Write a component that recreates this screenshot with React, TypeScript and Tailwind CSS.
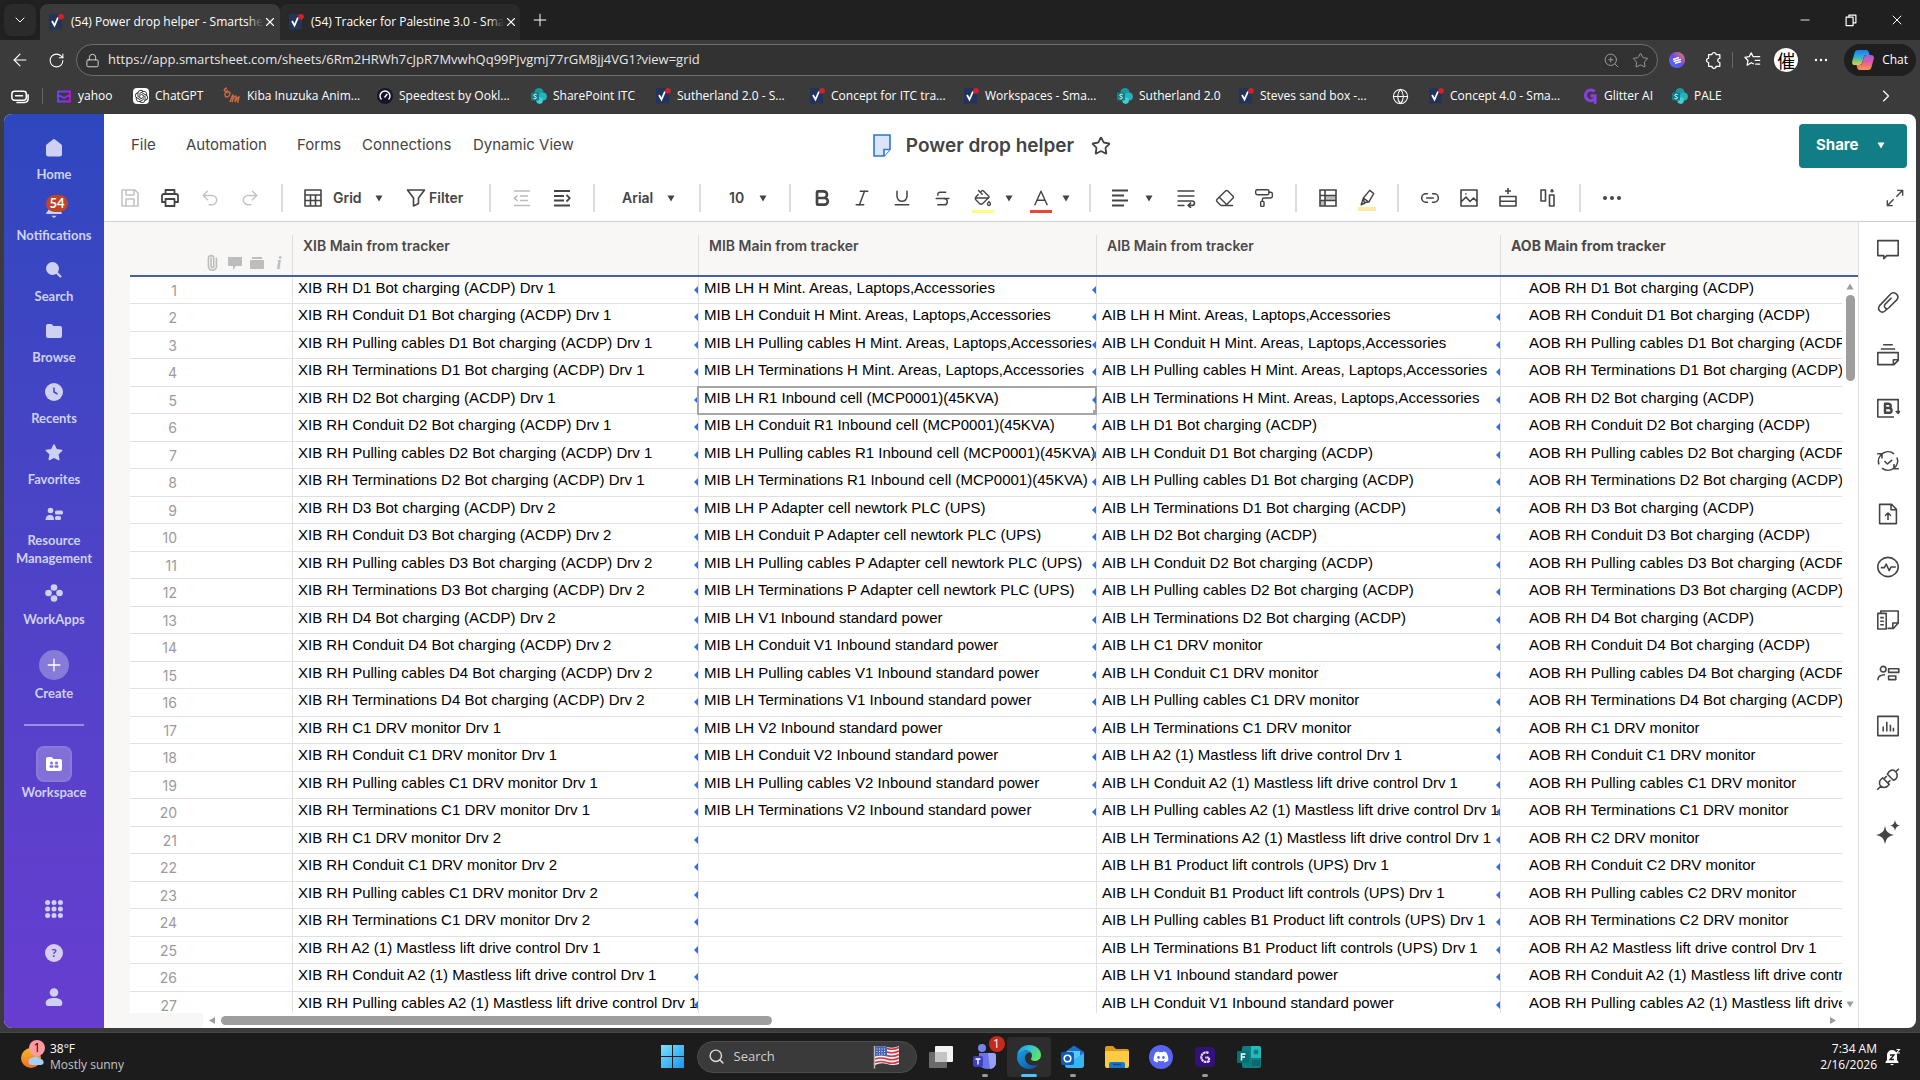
import React from "react";
import {
  ArrowLeft,
  Bold,
  ChevronDown,
  ChevronRight,
  Eraser,
  Globe,
  Italic,
  Link2,
  Lock,
  Minus,
  PaintBucket,
  PaintRoller,
  Paperclip,
  Plus,
  Redo2,
  RotateCw,
  Search,
  Star,
  Strikethrough,
  Underline,
  Undo2,
  X,
  ZoomIn,
} from "lucide-react";
import { FaDiscord } from "react-icons/fa";
import { SiOpenai } from "react-icons/si";

/* ---------- data ---------- */

const STEPS = ["", "Conduit ", "Pulling cables ", "Terminations "];

const expand = (prefix: string, items: string[]) =>
  items.flatMap((item) => STEPS.map((step) => `${prefix} ${step}${item}`));

const XIB = expand("XIB RH", [
  "D1 Bot charging (ACDP) Drv 1",
  "D2 Bot charging (ACDP) Drv 1",
  "D3 Bot charging (ACDP) Drv 2",
  "D4 Bot charging (ACDP) Drv 2",
  "C1 DRV monitor Drv 1",
  "C1 DRV monitor Drv 2",
  "A2 (1) Mastless lift drive control Drv 1",
]);

const MIB = expand("MIB LH", [
  "H Mint. Areas, Laptops,Accessories",
  "R1 Inbound cell (MCP0001)(45KVA)",
  "P Adapter cell newtork PLC (UPS)",
  "V1 Inbound standard power",
  "V2 Inbound standard power",
]);

const AIB = [
  "",
  ...expand("AIB LH", [
    "H Mint. Areas, Laptops,Accessories",
    "D1 Bot charging (ACDP)",
    "D2 Bot charging (ACDP)",
    "C1 DRV monitor",
    "A2 (1) Mastless lift drive control Drv 1",
    "B1 Product lift controls (UPS) Drv 1",
    "V1 Inbound standard power",
  ]),
];

const AOB = expand("AOB RH", [
  "D1 Bot charging (ACDP)",
  "D2 Bot charging (ACDP)",
  "D3 Bot charging (ACDP)",
  "D4 Bot charging (ACDP)",
  "C1 DRV monitor",
  "C2 DRV monitor",
  "A2 (1) Mastless lift drive control Drv 1",
]);
AOB[24] = "AOB RH A2 Mastless lift drive control Drv 1";

const ROWS = Array.from({ length: 27 }, (_, i) => i);

/* ---------- small pieces ---------- */

const Ico: React.FC<{
  d: string;
  size?: number;
  className?: string;
  width?: number;
}> = ({ d, size = 20, className = "", width = 1.6 }) => (
  <svg
    width={size}
    height={size}
    viewBox="0 0 20 20"
    fill="none"
    stroke="currentColor"
    strokeWidth={width}
    strokeLinejoin="round"
    className={`shrink-0 ${className}`}
  >
    <path d={d} />
  </svg>
);

const Caret: React.FC<{ className?: string }> = ({ className = "" }) => (
  <svg
    width="8"
    height="7"
    viewBox="0 0 8 7"
    className={`shrink-0 pointer-events-none ${className}`}
  >
    <path d="M0.5 0.5h7L4 6.5z" fill="currentColor" />
  </svg>
);

const SmartsheetIcon = () => (
  <svg width="16" height="16" viewBox="0 0 16 16" className="shrink-0">
    <path d="M1 0h13v16l-3-1-10 1z" fill="#22345a" />
    <path
      d="M4 7l2.5 4.5L10 3.5"
      fill="none"
      stroke="#fff"
      strokeWidth="1.8"
    />
    <circle cx="13" cy="2.8" r="2.8" fill="#d8202c" />
  </svg>
);

const SharePointIcon = () => (
  <svg width="16" height="16" viewBox="0 0 16 16" className="shrink-0">
    <circle cx="8" cy="4.5" r="4.5" fill="#1a98a1" />
    <circle cx="11.8" cy="8.5" r="4.1" fill="#27b3bc" />
    <circle cx="8.6" cy="12.6" r="3.3" fill="#45cdd4" />
    <rect x="0" y="4.5" width="8" height="8" rx="1" fill="#0f7f88" />
    <path
      d="M5.6 6.6C4.6 6 2.8 6.2 2.8 7.4c0 1.3 2.6.9 2.6 2.3 0 1.2-1.9 1.4-2.9.7"
      fill="none"
      stroke="#fff"
      strokeWidth="1"
    />
  </svg>
);

const YahooIcon = () => (
  <svg width="16" height="16" viewBox="0 0 16 16" className="shrink-0">
    <defs>
      <linearGradient id="yh">
        <stop offset="0" stopColor="#5b4bff" />
        <stop offset="1" stopColor="#b516e8" />
      </linearGradient>
    </defs>
    <path
      d="M2 3.5h12v10H2z M2 6.5l6 3.5 6-3.5"
      fill="none"
      stroke="url(#yh)"
      strokeWidth="1.8"
    />
  </svg>
);

const KibaIcon = () => (
  <svg
    width="18"
    height="18"
    viewBox="0 0 18 18"
    className="shrink-0"
    fill="none"
    stroke="#d0683f"
    strokeWidth="1.5"
  >
    <path d="M4 1C0 2 1 5 4 4M5 3C0 7 2 12 6 9c2-2 1-6-2-3M7 15c1-3 2-6 3-7 1 1 0 4-1 7 1-3 3-6 4-6 1 1-1 4-1 6 1-2 3-5 4-5 0 2-2 4-1 6" />
  </svg>
);

const SpeedtestIcon = () => (
  <svg width="16" height="16" viewBox="0 0 16 16" className="shrink-0">
    <circle cx="8" cy="8" r="8" fill="#15162b" />
    <path
      d="M4.5 11.5a5 5 0 1 1 7 0M7.5 9.5l2.8-3.5"
      fill="none"
      stroke="#fff"
      strokeWidth="1.4"
    />
  </svg>
);

const GlitterIcon = () => (
  <svg
    width="16"
    height="16"
    viewBox="0 0 16 16"
    className="shrink-0"
    fill="none"
    stroke="#8a3fe0"
    strokeWidth="3.2"
  >
    <path d="M12.5 3.5A5.3 5.3 0 1 0 12 11.5M8.5 7.800h4.5v6q0 1 1.500 1" />
  </svg>
);

/* ---------- browser ---------- */

const Tab: React.FC<{ title: string; active?: boolean }> = ({
  title,
  active,
}) => (
  <div
    className={`flex items-center w-60 h-9 px-2 rounded-t-lg ${
      active ? "bg-[#3b3b3b]" : "bg-[#292929]"
    }`}
  >
    <SmartsheetIcon />
    <span className="relative flex-1 ml-[7px] whitespace-nowrap">
      {title}
      <span
        className={`absolute right-0 inset-y-0 w-4 bg-linear-to-r from-transparent ${
          active ? "to-[#3b3b3b]" : "to-[#292929]"
        }`}
      />
    </span>
    <button aria-label="Close tab" className="relative">
      <X size={14} strokeWidth={2} />
    </button>
  </div>
);

const BOOKMARKS: { label: string; icon: React.ReactNode; w: string }[] = [
  { label: "yahoo", icon: <YahooIcon />, w: "w-[77px]" },
  {
    label: "ChatGPT",
    icon: (
      <span className="grid place-items-center size-4 rounded-sm bg-white text-[#222] shrink-0">
        <SiOpenai size={13} />
      </span>
    ),
    w: "w-[90px]",
  },
  { label: "Kiba Inuzuka Anim...", icon: <KibaIcon />, w: "w-[154px]" },
  { label: "Speedtest by Ookl...", icon: <SpeedtestIcon />, w: "w-[154px]" },
  { label: "SharePoint ITC", icon: <SharePointIcon />, w: "w-[124px]" },
  { label: "Sutherland 2.0 - S...", icon: <SmartsheetIcon />, w: "w-[154px]" },
  { label: "Concept for ITC tra...", icon: <SmartsheetIcon />, w: "w-[154px]" },
  { label: "Workspaces - Sma...", icon: <SmartsheetIcon />, w: "w-[154px]" },
  { label: "Sutherland 2.0", icon: <SharePointIcon />, w: "w-[121px]" },
  { label: "Steves sand box -...", icon: <SmartsheetIcon />, w: "w-[154px]" },
  { label: "", icon: <Globe size={17} strokeWidth={1.5} />, w: "w-9" },
  { label: "Concept 4.0 - Sma...", icon: <SmartsheetIcon />, w: "w-[154px]" },
  { label: "Glitter AI", icon: <GlitterIcon />, w: "w-[90px]" },
  { label: "PALE", icon: <SharePointIcon />, w: "w-16" },
];

const BrowserChrome = () => (
  <header className="text-white text-xs shrink-0">
    <div className="flex items-end h-10 bg-[#202020]">
      <button
        aria-label="Tab actions"
        className="grid place-items-center size-8 mx-1 mb-1 rounded-lg bg-[#2b2b2b]"
      >
        <ChevronDown size={16} strokeWidth={1.5} />
      </button>
      <Tab title="(54) Power drop helper - Smartshe" active />
      <Tab title="(54) Tracker for Palestine 3.0 - Sma" />
      <button aria-label="New tab" className="grid place-items-center w-10 h-10">
        <Plus size={20} strokeWidth={1.2} />
      </button>
      <div className="flex ml-auto h-10">
        <button aria-label="Minimize" className="grid place-items-center w-[46px]">
          <Minus size={14} strokeWidth={1.5} />
        </button>
        <button aria-label="Restore" className="grid place-items-center w-[46px]">
          <Ico size={14} d="M3 6h10v12H3z M7 6V3h10v11h-4" width={1.7} />
        </button>
        <button aria-label="Close" className="grid place-items-center w-[46px]">
          <X size={16} strokeWidth={1.5} />
        </button>
      </div>
    </div>

    <div className="flex items-center h-10 px-1 bg-[#3b3b3b]">
      <button aria-label="Back" className="grid place-items-center w-8">
        <ArrowLeft size={20} strokeWidth={1.4} />
      </button>
      <button aria-label="Refresh" className="grid place-items-center w-10">
        <RotateCw size={17} strokeWidth={1.5} />
      </button>
      <div className="flex flex-1 items-center h-8 rounded-full border border-[#6e6e6e] bg-[#323232] pl-2 pr-1 text-[#9a9a9a]">
        <Lock size={15} strokeWidth={1.6} className="text-[#d0d0d0]" />
        <input
          aria-label="Address"
          className="flex-1 ml-2 bg-transparent text-[13px] text-[#e6e6e6] outline-none"
          defaultValue="https://app.smartsheet.com/sheets/6Rm2HRWh7cJpR7MvwhQq99Pjvgmj77rGM8jj4VG1?view=grid"
        />
        <ZoomIn size={17} strokeWidth={1.4} />
        <Star size={17} strokeWidth={1.4} className="ml-3 mr-1" />
      </div>
      <span className="grid place-items-center w-[38px]">
        <svg width="16" height="16" viewBox="0 0 16 16">
          <defs>
            <linearGradient id="ext" x1="1" y1="0" x2="0" y2="1">
              <stop offset="0" stopColor="#ff7a52" />
              <stop offset="0.5" stopColor="#6a4bea" />
              <stop offset="1" stopColor="#3f7bff" />
            </linearGradient>
          </defs>
          <circle cx="8" cy="8" r="8" fill="url(#ext)" />
          <path
            d="M4 7.5l6-2M4.5 9.5l7.5-2.2M6 11.3l6-1.8"
            stroke="#fff"
            strokeWidth="1.5"
            fill="none"
          />
        </svg>
      </span>
      <button aria-label="Extensions" className="grid place-items-center w-9">
        <Ico
          size={18}
          width={1.4}
          d="M4 4h3.700a2.300 2.300 0 1 1 4.600 0H16.500v4.200a2.300 2.300 0 1 0 0 4.600V17h-4.200a2.300 2.300 0 1 1-4.600 0H4v-4.200a2.300 2.300 0 1 1 0-4.600z"
        />
      </button>
      <span className="w-px h-4 bg-[#666]" />
      <button aria-label="Favorites" className="grid place-items-center w-10">
        <Ico
          size={18}
          width={1.4}
          d="M11 14.5L8 13l-4.500 2.800.9-5.200L1 7l4.800-.7L8 2l2.200 4.300H18M12 10.500h6M12.500 14.500H18"
        />
      </button>
      <span className="grid place-items-center size-6 ml-px rounded-full bg-white text-black text-lg leading-6 overflow-hidden font-['Noto_Sans_CJK_TC',sans-serif]">
        催
      </span>
      <button
        aria-label="Settings and more"
        className="grid place-items-center w-[46px]"
      >
        <svg width="14" height="4" viewBox="0 0 14 4" fill="currentColor">
          <circle cx="2" cy="2" r="1.2" />
          <circle cx="7" cy="2" r="1.2" />
          <circle cx="12" cy="2" r="1.2" />
        </svg>
      </button>
      <button className="flex items-center h-8 rounded-full bg-[#1f1f1f] px-2 gap-2">
        <svg width="22" height="20" viewBox="0 0 22 20">
          <defs>
            <linearGradient id="cpa" x1="0" y1="0" x2="0" y2="1">
              <stop offset="0" stopColor="#1c7bf0" />
              <stop offset="0.5" stopColor="#2fb6c8" />
              <stop offset="1" stopColor="#e9d22c" />
            </linearGradient>
            <linearGradient id="cpb" x1="0" y1="0" x2="0" y2="1">
              <stop offset="0" stopColor="#9a5cf0" />
              <stop offset="0.5" stopColor="#ec5a9a" />
              <stop offset="1" stopColor="#fb9a4a" />
            </linearGradient>
          </defs>
          <path
            d="M6 0h8c2 0 2.500 1 3 3l.5 2h-3c-2 0-2.500 1-3 3l-1.300 4.500C9.700 14 9 15 7 15H3c-2.500 0-3.300-1.500-2.700-4L2.500 3C3 1 4 0 6 0z"
            fill="url(#cpa)"
          />
          <path
            d="M16 20H8c-2 0-2.500-1-3-3l-.5-2h3c2 0 2.500-1 3-3l1.300-4.500C12.300 6 13 5 15 5h4c2.500 0 3.300 1.500 2.700 4l-2.200 8c-.5 2-1.500 3-3.500 3z"
            fill="url(#cpb)"
          />
        </svg>
        Chat
      </button>
    </div>

    <nav className="flex items-center h-[34px] pb-[2px] bg-[#3b3b3b]">
      <span className="grid place-items-center w-10 pt-px">
        <Ico
          size={18}
          width={1.7}
          d="M4 3.500h10q3 0 3 3v4q0 3-3 3H4q-3 0-3-3v-4q0-3 3-3z M4.500 8.500h9 M19 7v5q0 4-4 4H6"
        />
      </span>
      <span className="w-px h-4 ml-[2px] mr-[13px] bg-[#666]" />
      {BOOKMARKS.map((b, i) => (
        <a
          key={i}
          href="#"
          aria-label={b.label || "Website"}
          className={`flex items-center gap-[6px] whitespace-nowrap shrink-0 ${b.w}`}
        >
          {b.icon}
          {b.label}
        </a>
      ))}
      <button aria-label="More favorites" className="ml-auto mr-6">
        <ChevronRight size={20} strokeWidth={1.4} />
      </button>
    </nav>
  </header>
);

/* ---------- left navigation ---------- */

const NavItem: React.FC<{ label: string; children: React.ReactNode }> = ({
  label,
  children,
}) => (
  <a href="#" className="flex flex-col items-center text-center">
    <span className="relative grid place-items-center h-5">{children}</span>
    <span className="mt-[7px] leading-[18px]">{label}</span>
  </a>
);

const Glyph: React.FC<{ children: React.ReactNode; size?: number }> = ({
  children,
  size = 18,
}) => (
  <svg width={size} height={size} viewBox="0 0 18 18" fill="currentColor">
    {children}
  </svg>
);

const FOLDER =
  "M3 2h3.500l2 2H15a2 2 0 0 1 2 2v8a2 2 0 0 1-2 2H3a2 2 0 0 1-2-2V4a2 2 0 0 1 2-2z";

const SideNav = () => (
  <nav className="flex flex-col w-[100px] shrink-0 bg-linear-to-b from-[#2d47bf] to-[#673dd0] text-[#cfd1f2] text-[13px] font-bold font-[Lato,sans-serif]">
    <div className="flex flex-col gap-4 pt-6">
      <NavItem label="Home">
        <Glyph>
          <path d="M7.600.7a2.200 2.200 0 0 1 2.800 0l6 4.900c.4.400.6.800.6 1.400v8a2.500 2.500 0 0 1-2.500 2.500h-11A2.500 2.500 0 0 1 1 15V7c0-.6.200-1 .6-1.400z" />
        </Glyph>
      </NavItem>
      <NavItem label="Notifications">
        <Glyph size={20}>
          <path d="M9 1a5 5 0 0 1 5 5v4l2 2.500v1H2v-1L4 10V6a5 5 0 0 1 5-5zM6.500 15h5L9 17z" />
        </Glyph>
        <span className="absolute -top-1 left-1/2 -translate-x-2 grid place-items-center w-[22px] h-[17px] rounded-full bg-[#c04428] text-white text-[13px] leading-none">
          54
        </span>
      </NavItem>
      <NavItem label="Search">
        <Glyph>
          <circle cx="7.5" cy="7.5" r="6.5" />
          <path d="M11 11l5 5" stroke="currentColor" strokeWidth="2.2" />
        </Glyph>
      </NavItem>
      <NavItem label="Browse">
        <Glyph>
          <path d={FOLDER} />
        </Glyph>
      </NavItem>
      <NavItem label="Recents">
        <Glyph>
          <circle cx="9" cy="9" r="9" />
          <path
            d="M9 4.500V9l3.500 2"
            stroke="#3d45c3"
            strokeWidth="1.5"
            fill="none"
          />
        </Glyph>
      </NavItem>
      <NavItem label="Favorites">
        <Glyph>
          <path
            d="M9 1l2.300 4.800 5.300.7-3.900 3.600 1 5.400L9 13l-4.700 2.500 1-5.400L1.400 6.500l5.300-.7z"
            stroke="currentColor"
            strokeWidth="1.6"
            strokeLinejoin="round"
          />
        </Glyph>
      </NavItem>
      <NavItem label="Resource Management">
        <Glyph>
          <circle cx="5.5" cy="5.5" r="2.8" />
          <path d="M.5 15c0-3 1.500-5 4.500-5s4 2 4 5z" />
          <rect x="10" y="5.5" width="8" height="4" rx="1.5" />
          <rect x="10" y="11" width="6" height="4" rx="1.5" />
        </Glyph>
      </NavItem>
      <NavItem label="WorkApps">
        <Glyph>
          <circle cx="9" cy="3.5" r="3.3" />
          <circle cx="3.5" cy="9" r="3.3" />
          <circle cx="14.5" cy="9" r="3.3" />
          <circle cx="9" cy="14.5" r="3.3" />
        </Glyph>
      </NavItem>
    </div>
    <button className="flex flex-col items-center mt-[22px] gap-1">
      <span className="grid place-items-center size-[30px] rounded-full bg-white/30 text-white">
        <Plus size={20} strokeWidth={1.6} />
      </span>
      <span className="leading-[18px]">Create</span>
    </button>
    <hr className="mt-[22px] mx-5 border-t-2 border-white/40" />
    <a href="#" className="flex flex-col items-center mt-5 gap-px">
      <span className="grid place-items-center size-9 rounded-lg border-2 border-white/30 bg-white/25 bg-clip-padding text-white">
        <Glyph>
          <path d={FOLDER} />
          <g fill="#8070d6">
            <circle cx="6.5" cy="8" r="1.5" />
            <circle cx="11.5" cy="8" r="1.5" />
            <rect x="4.5" y="10.3" width="4" height="2.4" rx="1" />
            <rect x="9.5" y="10.3" width="4" height="2.4" rx="1" />
          </g>
        </Glyph>
      </span>
      <span className="leading-[18px]">Workspace</span>
    </a>
    <div className="flex flex-col items-center gap-[26px] mt-auto mb-[22px]">
      <button aria-label="Apps">
        <Glyph>
          {[2.6, 9, 15.4].map((y) =>
            [2.6, 9, 15.4].map((x) => (
              <circle key={`${x}-${y}`} cx={x} cy={y} r="2.5" />
            ))
          )}
        </Glyph>
      </button>
      <button
        aria-label="Help"
        className="grid place-items-center size-[18px] rounded-full bg-[#d5cdf2] text-[#5f3ecd] text-xs leading-none"
      >
        ?
      </button>
      <button aria-label="Account">
        <Glyph>
          <circle cx="9" cy="4.5" r="4.3" />
          <path d="M.7 15c0-3.500 3.300-5 8.300-5s8.300 1.500 8.300 5c0 2-.8 3-2.300 3H3C1.500 18 .7 17 .7 15z" />
        </Glyph>
      </button>
    </div>
  </nav>
);

/* ---------- toolbar ---------- */

const Sep = () => (
  <span className="flex justify-center w-6 shrink-0">
    <span className="w-[2px] h-7 bg-[#dcdcdc]" />
  </span>
);

const Tool: React.FC<{
  label: string;
  className?: string;
  children: React.ReactNode;
}> = ({ label, className = "w-10", children }) => (
  <button
    aria-label={label}
    className={`flex items-center justify-center h-8 shrink-0 ${className}`}
  >
    {children}
  </button>
);

const Toolbar = () => (
  <div className="flex items-center h-[49px] pl-[6px] pt-[2px] border-b border-[#cfcfcf] text-sm font-semibold">
    <Tool label="Save" className="w-10 text-[#c4c4c4]">
      <Ico d="M2 2h13l3 3v13H2z M6 2v5h8V2 M6 18v-7h8v7" />
    </Tool>
    <Tool label="Print">
      <Ico
        width={1.8}
        d="M5.500 6V2h9v4 M5.500 14H2V8q0-2 2-2h12q2 0 2 2v6h-3.500 M5.500 11h9v7h-9z"
      />
    </Tool>
    <Tool label="Undo" className="w-10 text-[#c4c4c4]">
      <Undo2 size={20} strokeWidth={1.8} />
    </Tool>
    <Tool label="Redo" className="w-10 text-[#c4c4c4]">
      <Redo2 size={20} strokeWidth={1.8} />
    </Tool>
    <Sep />
    <button className="flex items-center w-[104px] h-8 pl-[9px] shrink-0">
      <Ico d="M2 2h16v16H2z M2 7h16 M2 12.500h16 M7.500 7v11 M12.500 7v11" />
      <span className="ml-[10px] w-[42px] text-left">Grid</span>
      <Caret />
    </button>
    <button className="flex items-center w-20 h-8 pl-2 shrink-0">
      <Ico d="M1.500 2h17l-6 8v5.500l-5 2.500v-8z" />
      <span className="ml-[3px]">Filter</span>
    </button>
    <Sep />
    <Tool label="Outdent" className="w-10 text-[#bcbcbc]">
      <Ico d="M2 3h16 M8 8h8 M8 12.500h8 M2 17.500h16 M5.500 7.500L2.500 10.200l3 2.800" />
    </Tool>
    <Tool label="Indent">
      <Ico
        width={1.8}
        d="M2 3h16 M2 8h10 M2 12.500h10 M2 17.500h16 M14.500 7l3.300 3.200-3.300 3.300"
      />
    </Tool>
    <Sep />
    <label className="flex items-center w-[82px] pl-4 shrink-0">
      <select
        aria-label="Font"
        className="appearance-none w-[45px] bg-transparent outline-none"
      >
        <option>Arial</option>
      </select>
      <Caret />
    </label>
    <Sep />
    <label className="flex items-center w-[66px] pl-[17px] shrink-0">
      <select
        aria-label="Font size"
        className="appearance-none w-[30px] bg-transparent outline-none"
      >
        <option>10</option>
      </select>
      <Caret />
    </label>
    <Sep />
    <Tool label="Bold">
      <Bold size={20} strokeWidth={3.2} />
    </Tool>
    <Tool label="Italic">
      <Italic size={20} strokeWidth={1.8} />
    </Tool>
    <Tool label="Underline">
      <Underline size={20} strokeWidth={1.8} />
    </Tool>
    <Tool label="Strikethrough">
      <Strikethrough size={19} strokeWidth={1.8} />
    </Tool>
    <Tool label="Background color" className="w-[60px] gap-[11px]">
      <span className="flex flex-col items-center w-[22px]">
        <PaintBucket size={18} strokeWidth={1.8} />
        <span className="w-[22px] h-[3px] mt-[3px] -mb-[6px] bg-[#fdfd80]" />
      </span>
      <Caret />
    </Tool>
    <Tool label="Text color" className="w-14 gap-[10px]">
      <span className="flex flex-col items-center w-[22px]">
        <Ico d="M3 18L10 2.500 17 18 M5.500 12.500h9" size={18} />
        <span className="w-[22px] h-[3px] mt-[3px] -mb-[6px] bg-[#f0443a]" />
      </span>
      <Caret />
    </Tool>
    <Sep />
    <Tool label="Align" className="w-16 gap-[14px] pr-1">
      <Ico d="M1 2.500h16 M1 7.500h12 M1 12.500h16 M1 17.500h12" width={1.8} />
      <Caret />
    </Tool>
    <Tool label="Wrap text" className="w-[39px]">
      <Ico d="M1.500 3h17 M1.500 8h17 M1.500 13h14.500q2.500 0 2.500 2.200t-2.500 2.200h-3.500 M15 14.500l-2.800 2.900L15 20 M1.500 17.500h7" />
    </Tool>
    <Tool label="Clear format" className="w-[39px]">
      <Eraser size={20} strokeWidth={1.7} />
    </Tool>
    <Tool label="Format painter">
      <PaintRoller size={20} strokeWidth={1.7} />
    </Tool>
    <Sep />
    <Tool label="Conditional format" className="w-[39px]">
      <svg
        width="20"
        height="20"
        viewBox="0 0 20 20"
        fill="none"
        stroke="currentColor"
        strokeWidth="1.6"
      >
        <path d="M7 7.500h11v5H7z M2 12.500h5V18H2z" fill="#bbb" stroke="none" />
        <path d="M2 2h16v16H2z M7 2v16 M2 7.500h16 M2 12.500h16" />
      </svg>
    </Tool>
    <Tool label="Highlight changes" className="w-[39px]">
      <span className="flex flex-col items-center">
        <Ico
          size={18}
          d="M6 10l7-8.500 4.500 3.500-5.500 9.500-5 .5z M6 10l-2.500 7.500L9 15 M6 10l6 4.500"
        />
        <span className="w-[18px] h-[4px] -mb-1 bg-[#fbeaa5]" />
      </span>
    </Tool>
    <Sep />
    <Tool label="Link" className="w-[39px]">
      <Link2 size={20} strokeWidth={1.8} />
    </Tool>
    <Tool label="Image" className="w-[39px]">
      <Ico d="M2 2h16v16H2z M2 14l5-5 4 4.500 3.500-3.500 3.500 3.500 M6.200 6h1.300" />
    </Tool>
    <Tool label="Insert row" className="w-10">
      <Ico d="M10 0v6 M7 3h6 M2 8.500h16v9.500H2z M2 13.200h16" />
    </Tool>
    <Tool label="Insert column" className="w-10">
      <Ico d="M3 2h4.500v11H3z M11.500 7H16v11h-4.500z M14 1v3.500 M12.300 3h3.500" />
    </Tool>
    <Sep />
    <Tool label="More" className="w-10">
      <svg width="18" height="4" viewBox="0 0 18 4" fill="currentColor">
        <circle cx="2" cy="2" r="2" />
        <circle cx="9" cy="2" r="2" />
        <circle cx="16" cy="2" r="2" />
      </svg>
    </Tool>
    <Tool label="Expand" className="w-10 ml-auto mr-px">
      <Ico d="M11.500 8.500l7-7 M12.500 1.500h6v6 M8.500 11.500l-7 7 M1.500 12.500v6h6" size={18} />
    </Tool>
  </div>
);

/* ---------- grid ---------- */

const LinkMark = () => (
  <svg
    width="4"
    height="8"
    viewBox="0 0 4 8"
    className="absolute right-0 top-[9px]"
  >
    <path d="M4 0v8L0 4z" fill="#2f6fe4" />
  </svg>
);

const Cell: React.FC<{
  text?: string;
  linked?: boolean;
  selected?: boolean;
  className?: string;
}> = ({ text, linked, selected, className = "pl-[5px]" }) => (
  <td
    className={`relative border-b border-l border-[#e0e0e0] p-0 align-top overflow-hidden whitespace-nowrap leading-[22px] ${className} ${
      selected ? "z-10 outline-2 -outline-offset-1 outline-[#a6a6a6]" : ""
    }`}
  >
    {text}
    {linked && text && <LinkMark />}
    {selected && (
      <span className="absolute right-0 bottom-0 size-[3px] bg-[#a6a6a6]" />
    )}
  </td>
);

const HeadCell: React.FC<{ children: React.ReactNode; last?: boolean }> = ({
  children,
  last,
}) => (
  <th
    scope="col"
    className={`p-0 pt-[13px] text-left align-top ${
      last ? "font-bold" : "font-semibold"
    }`}
  >
    <div className="h-10 border-l border-[#dedede] pl-[10px] leading-[22px]">
      {children}
    </div>
  </th>
);

const Grid = () => (
  <div className="relative flex flex-col flex-1 min-w-0 bg-[#f8f7f6] pl-[26px]">
    <div className="flex-1 min-h-0 overflow-hidden">
      <table className="w-full table-fixed border-separate border-spacing-0 font-['Liberation_Sans',Arial,sans-serif] text-[15px] text-black">
        <colgroup>
          <col className="w-[162px]" />
          <col className="w-[406px]" />
          <col className="w-[398px]" />
          <col className="w-[404px]" />
          <col />
        </colgroup>
        <thead className="font-[Inter,sans-serif] text-sm text-[#4a4a4a] [&_th]:border-b-2 [&_th]:border-[#4660a8]">
          <tr className="h-[55px]">
            <th className="p-0 align-bottom">
              <div className="flex items-center justify-end gap-2 pr-[6px] pb-1 text-[#bdbdbd]">
                <Paperclip size={16} strokeWidth={2.4} className="-rotate-45" />
                <svg width="14" height="14" viewBox="0 0 14 14" fill="currentColor">
                  <path d="M0 1h14v9H8l-3 4v-4H0z" />
                </svg>
                <svg width="14" height="14" viewBox="0 0 14 14" fill="currentColor">
                  <path d="M2 1h10v2H2zM1 4h12q1 0 1 1v7q0 1-1 1H1q-1 0-1-1V5q0-1 1-1z" />
                </svg>
                <span className="w-[14px] font-['Liberation_Serif',serif] italic text-lg leading-4 text-center">
                  i
                </span>
              </div>
            </th>
            <HeadCell>XIB Main from tracker</HeadCell>
            <HeadCell>MIB Main from tracker</HeadCell>
            <HeadCell>AIB Main from tracker</HeadCell>
            <HeadCell last>AOB Main from tracker</HeadCell>
          </tr>
        </thead>
        <tbody className="bg-white">
          {ROWS.map((i) => (
            <tr key={i} className="h-[27px] even:h-7">
              <td className="p-0 pr-[115px] pt-[3px] border-b border-[#e0e0e0] text-right align-top leading-[22px] text-sm text-[#9b9b9b] font-[Inter,sans-serif]">
                {i + 1}
              </td>
              <Cell text={XIB[i]} linked />
              <Cell text={MIB[i]} linked selected={i === 4} />
              <Cell text={AIB[i]} linked />
              <Cell text={AOB[i]} className="pl-7" />
            </tr>
          ))}
        </tbody>
      </table>
    </div>
    <div className="flex items-center h-[15px] pl-[73px] bg-[#f8f7f6]">
      <div className="flex items-center flex-1 h-full bg-white pl-[5px] pr-[21px] text-[#9c9c9c]">
        <Caret className="rotate-90" />
        <div className="w-[551px] h-[9px] ml-[5px] mr-auto rounded-full bg-[#9e9e9e]" />
        <Caret className="-rotate-90" />
      </div>
    </div>
    {/* vertical scrollbar, over the right end of the rows */}
    <div className="absolute z-20 right-0 top-[55px] bottom-0 w-4 flex flex-col items-center bg-white pt-[6px] pb-5 text-[#9c9c9c]">
      <Caret className="rotate-180" />
      <div className="w-[9px] h-[86px] mt-[5px] mb-auto rounded-full bg-[#9e9e9e]" />
      <Caret />
    </div>
  </div>
);

/* ---------- right rail ---------- */

const RAIL = [
  { label: "Conversations", d: "M1.500 3h17v12.500H9L6.500 18v-2.500h-5z" },
  {
    label: "Attachments",
    d: "M9.500 15.500l-2 2c-3 2.500-7-1-4.500-4.500L12 3.500c3-3 8 1 5.500 4.500L10.500 15c-2 1.500-4.500-.5-3-3L13 6.500",
  },
  {
    label: "Proofs",
    d: "M6 1.500h8M4 5h12M1.500 8h17v6.500L15 18H1.500zM14.500 18v-4h4",
  },
  {
    label: "Brandfolder",
    d: "M15 17.500H1.500V3h17v5M18.500 7.500v7M16.500 12.500l2 2 1.500-2",
    bold: "M7.500 6.500v7.500h3q2.500 0 2.500-2t-2.500-2H8h2q2.300 0 2.300-1.700T10 6.500z",
  },
  {
    label: "Update requests",
    d: "M2.500 13A8 8 0 0 1 15 4M17.500 7A8 8 0 0 1 5 16M1 4h4v4M19 16.500h-4v-4M7 10l2.500 2.500L13.500 9",
  },
  {
    label: "Publish",
    d: "M3 2h10l4 4v12H3zM12.500 2v4.500H17M10 15V9.500M7.500 11.500l2.500-2.300 2.500 2.300",
  },
  {
    label: "Activity log",
    d: "M10 2a8.500 8 0 1 1 0 16 8.500 8 0 0 1 0-16zM4 10.500h3l1.500-3 2.500 5.500 1.500-3h4",
  },
  {
    label: "Summary",
    d: "M1.500 4.500h7v13h-7zM3.500 8h3M3.500 11h3M3.500 14h3M4 4V2.500h14.500v10l-4 4.500h-5M14 17v-4.500h4.500",
  },
  {
    label: "Resource management",
    d: "M6 4.500a2.300 2.300 0 1 1 0 4.700 2.300 2.300 0 0 1 0-4.700zM1.500 16c0-3 2-4.500 6-4.500M10.500 6.500H19v3h-8.500zM10.500 12.500h6v3h-6z",
  },
  {
    label: "Charts",
    d: "M1.500 2h17v16h-17zM6 14.500v-4M9 14.500v-8M12 14.500V9M14.500 14.500v-3",
  },
  {
    label: "Connectors",
    d: "M1 19l3-3M4 16c-2.500-3-.5-5.500 1.500-7l5.500 5.500c-2 2.500-4.500 3.500-7 1.500zM7 9.500l2-2M10 13l2-2M9.500 6l5 5c3-1 4.500-4 2-7s-5.500-1-7 2zM16.500 4L19 1.500",
  },
];

const RightRail = () => (
  <aside className="flex flex-col items-center w-[58px] shrink-0 border-l border-[#dedede] text-[#444]">
    {RAIL.map((r) => (
      <button
        key={r.label}
        aria-label={r.label}
        className="grid place-items-center w-full h-[53px]"
      >
        <svg
          width="24"
          height="24"
          viewBox="0 0 20 20"
          fill="none"
          stroke="currentColor"
          strokeWidth="1.3"
          strokeLinejoin="round"
        >
          <path d={r.d} />
          {r.bold && <path d={r.bold} strokeWidth="2" />}
        </svg>
      </button>
    ))}
    <button aria-label="AI" className="grid place-items-center w-full h-[53px]">
      <svg width="24" height="24" viewBox="0 0 24 24" fill="currentColor">
        <path d="M9 6q1 8 9 9-8 1-9 9-1-8-9-9 8-1 9-9zM19 0q.6 5 5 5.500-4.400.5-5 5.500-.6-5-5-5.500Q18.400 5 19 0z" />
      </svg>
    </button>
  </aside>
);

const Sheet = () => (
  <main className="flex flex-1 min-h-0 mx-1 mb-1 rounded-lg overflow-hidden bg-white">
    <SideNav />
    <div className="flex flex-col flex-1 min-w-0 font-[Inter,sans-serif] text-[#444]">
      <div className="relative flex items-center h-[59px] shrink-0 pl-[27px] pr-[9px] pt-1 text-[15px]">
        <nav className="flex">
          <a href="#" className="w-[55px]">File</a>
          <a href="#" className="w-[111px]">Automation</a>
          <a href="#" className="w-[65px]">Forms</a>
          <a href="#" className="w-[111px]">Connections</a>
          <a href="#" className="w-28 whitespace-nowrap">Dynamic View</a>
        </nav>
        <div className="absolute inset-x-0 flex items-center justify-center pointer-events-none pr-9">
          <svg width="18" height="23" viewBox="0 0 18 23">
            <path
              d="M1 1h16v14.500L11 22H1z"
              fill="#dae4fb"
              stroke="#2a7ac4"
              strokeWidth="1.6"
            />
            <path
              d="M17 15.500h-6V22"
              fill="#fff"
              stroke="#2a7ac4"
              strokeWidth="1.6"
            />
          </svg>
          <h1 className="ml-[15px] mr-[17px] text-[19px] leading-6 font-semibold">
            Power drop helper
          </h1>
          <Star size={20} strokeWidth={2.2} />
        </div>
        <button className="relative flex items-center justify-between w-[108px] h-11 ml-auto pl-[17px] pr-[22px] rounded bg-[#117d84] text-white font-bold">
          Share
          <Caret />
        </button>
      </div>
      <Toolbar />
      <div className="flex flex-1 min-h-0">
        <Grid />
        <RightRail />
      </div>
    </div>
  </main>
);

/* ---------- taskbar ---------- */

const Task: React.FC<{
  label: string;
  running?: boolean;
  active?: boolean;
  children: React.ReactNode;
}> = ({ label, running, active, children }) => (
  <button
    aria-label={label}
    className={`relative grid place-items-center w-11 h-10 rounded ${
      active ? "bg-white/8" : ""
    }`}
  >
    {children}
    {running && (
      <span className="absolute bottom-0 w-[6px] h-[3px] rounded-full bg-[#9a9a9a]" />
    )}
    {active && (
      <span className="absolute bottom-0 w-4 h-[3px] rounded-full bg-[#4cc2ff]" />
    )}
  </button>
);

const Taskbar = () => (
  <footer className="flex items-center h-12 shrink-0 bg-[#1c1c1c] border-t border-[#464646] text-white text-xs">
    <div className="flex flex-1 items-center pl-5">
      <span className="relative w-[30px] h-7">
        <svg width="26" height="28" viewBox="0 0 26 28">
          <defs>
            <linearGradient id="sun" x1="0" y1="0" x2="0" y2="1">
              <stop offset="0" stopColor="#f8b62c" />
              <stop offset="1" stopColor="#ef6f1e" />
            </linearGradient>
          </defs>
          <circle cx="11" cy="15" r="10" fill="url(#sun)" />
          <path
            d="M12 22a3.500 3.500 0 0 1 0-7 5 5 0 0 1 8 1 3 3 0 0 1 1 6z"
            fill="#a9cdfa"
          />
        </svg>
        <span className="absolute -top-[3px] left-[9px] grid place-items-center size-4 rounded-full bg-[#ff99a4] text-black">
          1
        </span>
      </span>
      <span className="leading-4">
        38°F
        <br />
        <span className="text-[#c4c4c4]">Mostly sunny</span>
      </span>
    </div>
    <div className="flex items-center">
      <Task label="Start">
        <svg width="23" height="23" viewBox="0 0 23 23">
          <defs>
            <linearGradient id="win" x1="0" y1="0" x2="1" y2="1">
              <stop offset="0" stopColor="#7fe0ff" />
              <stop offset="1" stopColor="#1496f0" />
            </linearGradient>
          </defs>
          <path
            d="M0 0h11v11H0z M12 0h11v11H12z M0 12h11v11H0z M12 12h11v11H12z"
            fill="url(#win)"
          />
        </svg>
      </Task>
      <label className="flex items-center w-[220px] h-8 mx-[2px] pl-[10px] pr-4 rounded-full bg-[#3a3a3a] border border-[#4c4c4c] text-[13px]">
        <Search size={17} strokeWidth={2} className="text-[#ddd]" />
        <input
          aria-label="Search"
          placeholder="Search"
          className="flex-1 min-w-0 ml-[9px] bg-transparent outline-none placeholder:text-[#cfcfcf]"
        />
        <svg width="27" height="24" viewBox="0 0 27 24">
          <path d="M1.500 1v22.500" stroke="#b9b9b9" strokeWidth="1.5" />
          <path d="M2 2q6-2 12 0t12-1v18q-6 2-12 0t-12 1z" fill="#f3f3f3" />
          <path
            d="M2 3.500q6-2 12 0t12-1M2 7q6-2 12 0t12-1M2 10.500q6-2 12 0t12-1M2 14q6-2 12 0t12-1M2 17.500q6-2 12 0t12-1"
            fill="none"
            stroke="#cf3545"
            strokeWidth="1.6"
          />
          <path d="M2 2q6-2 12 0v9.500q-6-2-12 0z" fill="#4a63b0" />
          <path
            d="M3.500 4h10M3.500 6.500h10M3.500 9h10"
            stroke="#dfe5f7"
            strokeWidth="1"
            strokeDasharray="1 1.5"
          />
        </svg>
      </label>
      <Task label="Task view">
        <svg width="24" height="22" viewBox="0 0 24 22">
          <rect x="6" y="0" width="18" height="16" rx="1" fill="#f3f3f3" />
          <rect x="0" y="6" width="18" height="16" rx="1" fill="#6a6a6a" />
          <rect x="6" y="6" width="12" height="10" fill="#c4c4c4" />
        </svg>
      </Task>
      <Task label="Teams" running>
        <svg width="24" height="26" viewBox="0 0 24 26">
          <circle cx="9" cy="4" r="4" fill="#7b83eb" />
          <path d="M6 9h14q3 0 3 3v6q0 7-8 7-9 0-9-7z" fill="#6c74ec" />
          <path d="M15 9h5q3 0 3 3v6q0 6-6 7z" fill="#9aa0f7" />
          <rect x="0" y="12" width="10" height="11" rx="2" fill="#3d3fc2" />
          <path d="M2.500 15h5M5 15v5.500" stroke="#fff" strokeWidth="1.4" />
        </svg>
        <span className="absolute -top-px right-[2px] grid place-items-center size-4 rounded-full bg-[#c42b1c]">
          1
        </span>
      </Task>
      <Task label="Edge" active>
        <svg width="24" height="24" viewBox="0 0 24 24">
          <defs>
            <linearGradient id="eg1" x1="0" y1="0" x2="1" y2="0.4">
              <stop offset="0" stopColor="#1f8fe0" />
              <stop offset="0.5" stopColor="#35c1d8" />
              <stop offset="1" stopColor="#5be36a" />
            </linearGradient>
            <linearGradient id="eg2" x1="0" y1="0" x2="1" y2="1">
              <stop offset="0" stopColor="#1b9de2" />
              <stop offset="1" stopColor="#0c4fa0" />
            </linearGradient>
          </defs>
          <path
            d="M0 11C.5 4.500 5.500 0 12 0c7 0 12 4.500 12 10 0 3.500-2.500 6-6 6-2.500 0-4-1-4-2s1-1.500 1-3.500C15 8 12.500 5.500 9 5.500 5 5.500 1.500 8 0 11z"
            fill="url(#eg1)"
          />
          <path
            d="M0 12c1-4 4-6.500 9-6.500 2 0 3.500.8 4.500 2C9.500 7.500 8 10.500 8 13c0 4.500 4 7.500 8 7.500 2 0 4-.5 5.500-1.500C19.500 22 16 24 12 24 5.500 24 0 19 0 12z"
            fill="url(#eg2)"
          />
        </svg>
      </Task>
      <Task label="Outlook" running>
        <svg width="24" height="24" viewBox="0 0 24 24">
          <path d="M4 7l9-6.500L23 7v13q0 3-3 3H7q-3 0-3-3z" fill="#1a6fd0" />
          <path d="M6 6h13v9H6z" fill="#5cc8fa" />
          <path d="M4 20l19-12v12q0 3-3 3H7q-3 0-3-3z" fill="#35b6f2" />
          <rect x="0" y="7" width="13" height="13" rx="2" fill="#0f5bb8" />
          <circle
            cx="6.5"
            cy="13.5"
            r="3.3"
            fill="none"
            stroke="#fff"
            strokeWidth="1.6"
          />
        </svg>
      </Task>
      <Task label="File Explorer">
        <svg width="24" height="22" viewBox="0 0 24 22">
          <path d="M0 2q0-2 2-2h6l3 3h11q2 0 2 2v5H0z" fill="#e0981a" />
          <path d="M0 6q0-1 1-1h22q1 0 1 1v14q0 2-2 2H2q-2 0-2-2z" fill="#fdcb45" />
          <path d="M4 22v-4q0-2 2-2h12q2 0 2 2v4z" fill="#1878c8" />
          <path d="M8 18.500h8" stroke="#0b4a86" strokeWidth="1.5" />
        </svg>
      </Task>
      <Task label="Discord">
        <span className="grid place-items-center size-6 rounded-full bg-[#5865f2]">
          <FaDiscord size={16} />
        </span>
      </Task>
      <Task label="Glitter" running>
        <svg width="20" height="20" viewBox="0 0 20 20">
          <rect width="20" height="20" rx="4" fill="#33107a" />
          <path
            d="M13.500 6A4.800 4.800 0 1 0 14 14v-3.500h-4"
            fill="none"
            stroke="#eadcff"
            strokeWidth="2.2"
            strokeDasharray="2.5 0.5"
          />
        </svg>
      </Task>
      <Task label="Forms">
        <svg width="24" height="22" viewBox="0 0 24 22">
          <rect x="5" y="0" width="19" height="22" rx="2" fill="#0b7f83" />
          <path d="M14 0h8q2 0 2 2v10H14z" fill="#28b8b9" />
          <circle cx="19" cy="6" r="2.5" fill="#0b7f83" />
          <rect x="15" y="14" width="8" height="6" fill="#10686c" />
          <rect x="0" y="5" width="12" height="12" rx="1" fill="#077075" />
          <path
            d="M4.500 14.500V8h4M4.500 11H8"
            fill="none"
            stroke="#fff"
            strokeWidth="1.5"
          />
        </svg>
      </Task>
    </div>
    <div className="flex flex-1 items-center justify-end gap-2 pr-[19px]">
      <span className="leading-4 text-right">
        7:34 AM
        <br />
        2/16/2026
      </span>
      <svg width="16" height="18" viewBox="0 0 16 18">
        <path
          d="M7 2a5 5 0 0 1 5 5v5l1.500 2v1H.5v-1L2 12V7a5 5 0 0 1 5-5zM5 16h4l-2 1.500z"
          fill="#fff"
        />
        <path
          d="M11.500 1.500h3l-3 3.500h3.500"
          fill="none"
          stroke="#fff"
          strokeWidth="1.1"
        />
        <path
          d="M5 7h4l-4 4.500h4"
          fill="none"
          stroke="#1c1c1c"
          strokeWidth="1.3"
        />
      </svg>
    </div>
  </footer>
);

export default function App() {
  return (
    <div className="flex flex-col h-screen overflow-hidden bg-[#3b3b3b] font-['Open_Sans',sans-serif]">
      <BrowserChrome />
      <Sheet />
      <Taskbar />
    </div>
  );
}
